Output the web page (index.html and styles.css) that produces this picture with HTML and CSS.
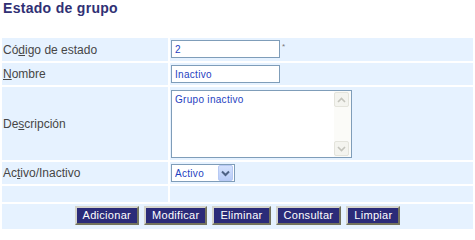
FILE: index.html
```html
<!DOCTYPE html>
<html lang="es">
<head>
<meta charset="utf-8">
<title>Estado de grupo</title>
<link rel="stylesheet" href="styles.css">
</head>
<body>
<h1 class="title">Estado de grupo</h1>
<form class="form">
  <div class="label">Có<u>d</u>igo de estado</div>
  <div class="field"><input class="text" type="text" value="2"><span class="req">*</span></div>

  <div class="label"><u>N</u>ombre</div>
  <div class="field"><input class="text" type="text" value="Inactivo"></div>

  <div class="label">De<u>s</u>cripción</div>
  <div class="field field-tall">
    <div class="memo">
      <div class="memo-text">Grupo inactivo</div>
      <div class="scroll">
        <span class="sbtn"><svg width="9" height="6" viewBox="0 0 9 6"><path d="M1 5 L4.5 1.5 L8 5" fill="none" stroke="#c4c4bc" stroke-width="1.6"/></svg></span>
        <span class="track"></span>
        <span class="sbtn"><svg width="9" height="6" viewBox="0 0 9 6"><path d="M1 1 L4.5 4.5 L8 1" fill="none" stroke="#c4c4bc" stroke-width="1.6"/></svg></span>
      </div>
    </div>
  </div>

  <div class="label">Ac<u>t</u>ivo/Inactivo</div>
  <div class="field">
    <div class="combo">
      <select class="combo-select"><option>Activo</option><option>Inactivo</option></select>
      <span class="combo-btn"><svg width="9" height="7" viewBox="0 0 9 7"><path d="M1 1.5 L4.5 5 L8 1.5" fill="none" stroke="#4d6185" stroke-width="2"/></svg></span>
    </div>
  </div>

  <div class="label"></div>
  <div class="field"></div>

  <div class="actions">
    <button type="button" class="btn">Adicionar</button>
    <button type="button" class="btn">Modificar</button>
    <button type="button" class="btn">Eliminar</button>
    <button type="button" class="btn">Consultar</button>
    <button type="button" class="btn">Limpiar</button>
  </div>
</form>
</body>
</html>
```

FILE: styles.css
```css
html, body {
  margin: 0;
  padding: 0;
  background: #ffffff;
  font-family: "Liberation Sans", Arial, sans-serif;
}

.title {
  margin: 0 0 20px 0;
  padding: 0 3px;
  font-size: 14px;
  line-height: 16px;
  font-weight: bold;
  letter-spacing: 0.3px;
  color: #303074;
}

.form {
  display: grid;
  grid-template-columns: 166px 1fr;
  grid-template-rows: 23px 22px 73px 22px 16px 25px;
  gap: 2px;
  padding: 2px;
  margin: 0;
}

.label {
  background: #e6f2ff;
  display: flex;
  align-items: center;
  padding-left: 1px;
  font-size: 12px;
  color: #464646;
}

.field {
  background: #e6f2ff;
  display: flex;
  align-items: flex-start;
  padding: 2px 0 0 1px;
}

.field-tall {
  padding-top: 3px;
}

.text {
  box-sizing: border-box;
  width: 109px;
  height: 18px;
  margin: 0;
  border: 1px solid #7f9db9;
  padding: 0 3px;
  background: #ffffff;
  font-family: "Liberation Sans", Arial, sans-serif;
  font-size: 10px;
  letter-spacing: 0.3px;
  color: #1f3fbf;
}

.req {
  font-size: 8px;
  color: #777777;
  margin: 3px 0 0 2px;
  line-height: 8px;
}

.memo {
  box-sizing: border-box;
  width: 181px;
  height: 68px;
  border: 1px solid #7f9db9;
  background: #ffffff;
  display: flex;
}

.memo-text {
  flex: 1;
  padding: 3px 3px;
  font-size: 10px;
  line-height: 12px;
  letter-spacing: 0.3px;
  color: #1f3fbf;
}

.scroll {
  width: 17px;
  display: flex;
  flex-direction: column;
  background: #fbfbf8;
  padding: 1px 1px 1px 0;
  box-sizing: border-box;
}

.sbtn {
  box-sizing: border-box;
  width: 15px;
  height: 15px;
  border: 1px solid #e4e4dc;
  border-radius: 2px;
  background: #f4f4ef;
  display: flex;
  align-items: center;
  justify-content: center;
}

.track {
  flex: 1;
}

.combo {
  box-sizing: border-box;
  width: 64px;
  height: 18px;
  border: 1px solid #7f9db9;
  background: #ffffff;
  display: flex;
  align-items: stretch;
}

.combo-select {
  flex: 1;
  min-width: 0;
  appearance: none;
  -webkit-appearance: none;
  border: none;
  background: transparent;
  padding: 0 0 0 3px;
  margin: 0;
  font-family: "Liberation Sans", Arial, sans-serif;
  font-size: 10px;
  letter-spacing: 0.3px;
  color: #1f3fbf;
  outline: none;
}

.combo-btn {
  box-sizing: border-box;
  width: 15px;
  margin: 0 1px 0 0;
  border: 1px solid #b7c9f3;
  border-radius: 2px;
  background: linear-gradient(#d4e1fd, #b9ccf8);
  display: flex;
  align-items: center;
  justify-content: center;
}

.actions {
  grid-column: 1 / -1;
  background: #e6f2ff;
  display: flex;
  justify-content: center;
  align-items: flex-start;
  gap: 5px;
  padding-top: 2px;
}

.btn {
  box-sizing: border-box;
  height: 19px;
  margin: 0;
  padding: 0 6px;
  border-width: 2px;
  border-style: solid;
  border-color: #d4d4cc #74745e #74745e #d4d4cc;
  background: #2b2b79;
  color: #ffffff;
  font-family: "Liberation Sans", Arial, sans-serif;
  font-size: 11px;
  letter-spacing: 0.3px;
  line-height: 15px;
  cursor: pointer;
}
```
